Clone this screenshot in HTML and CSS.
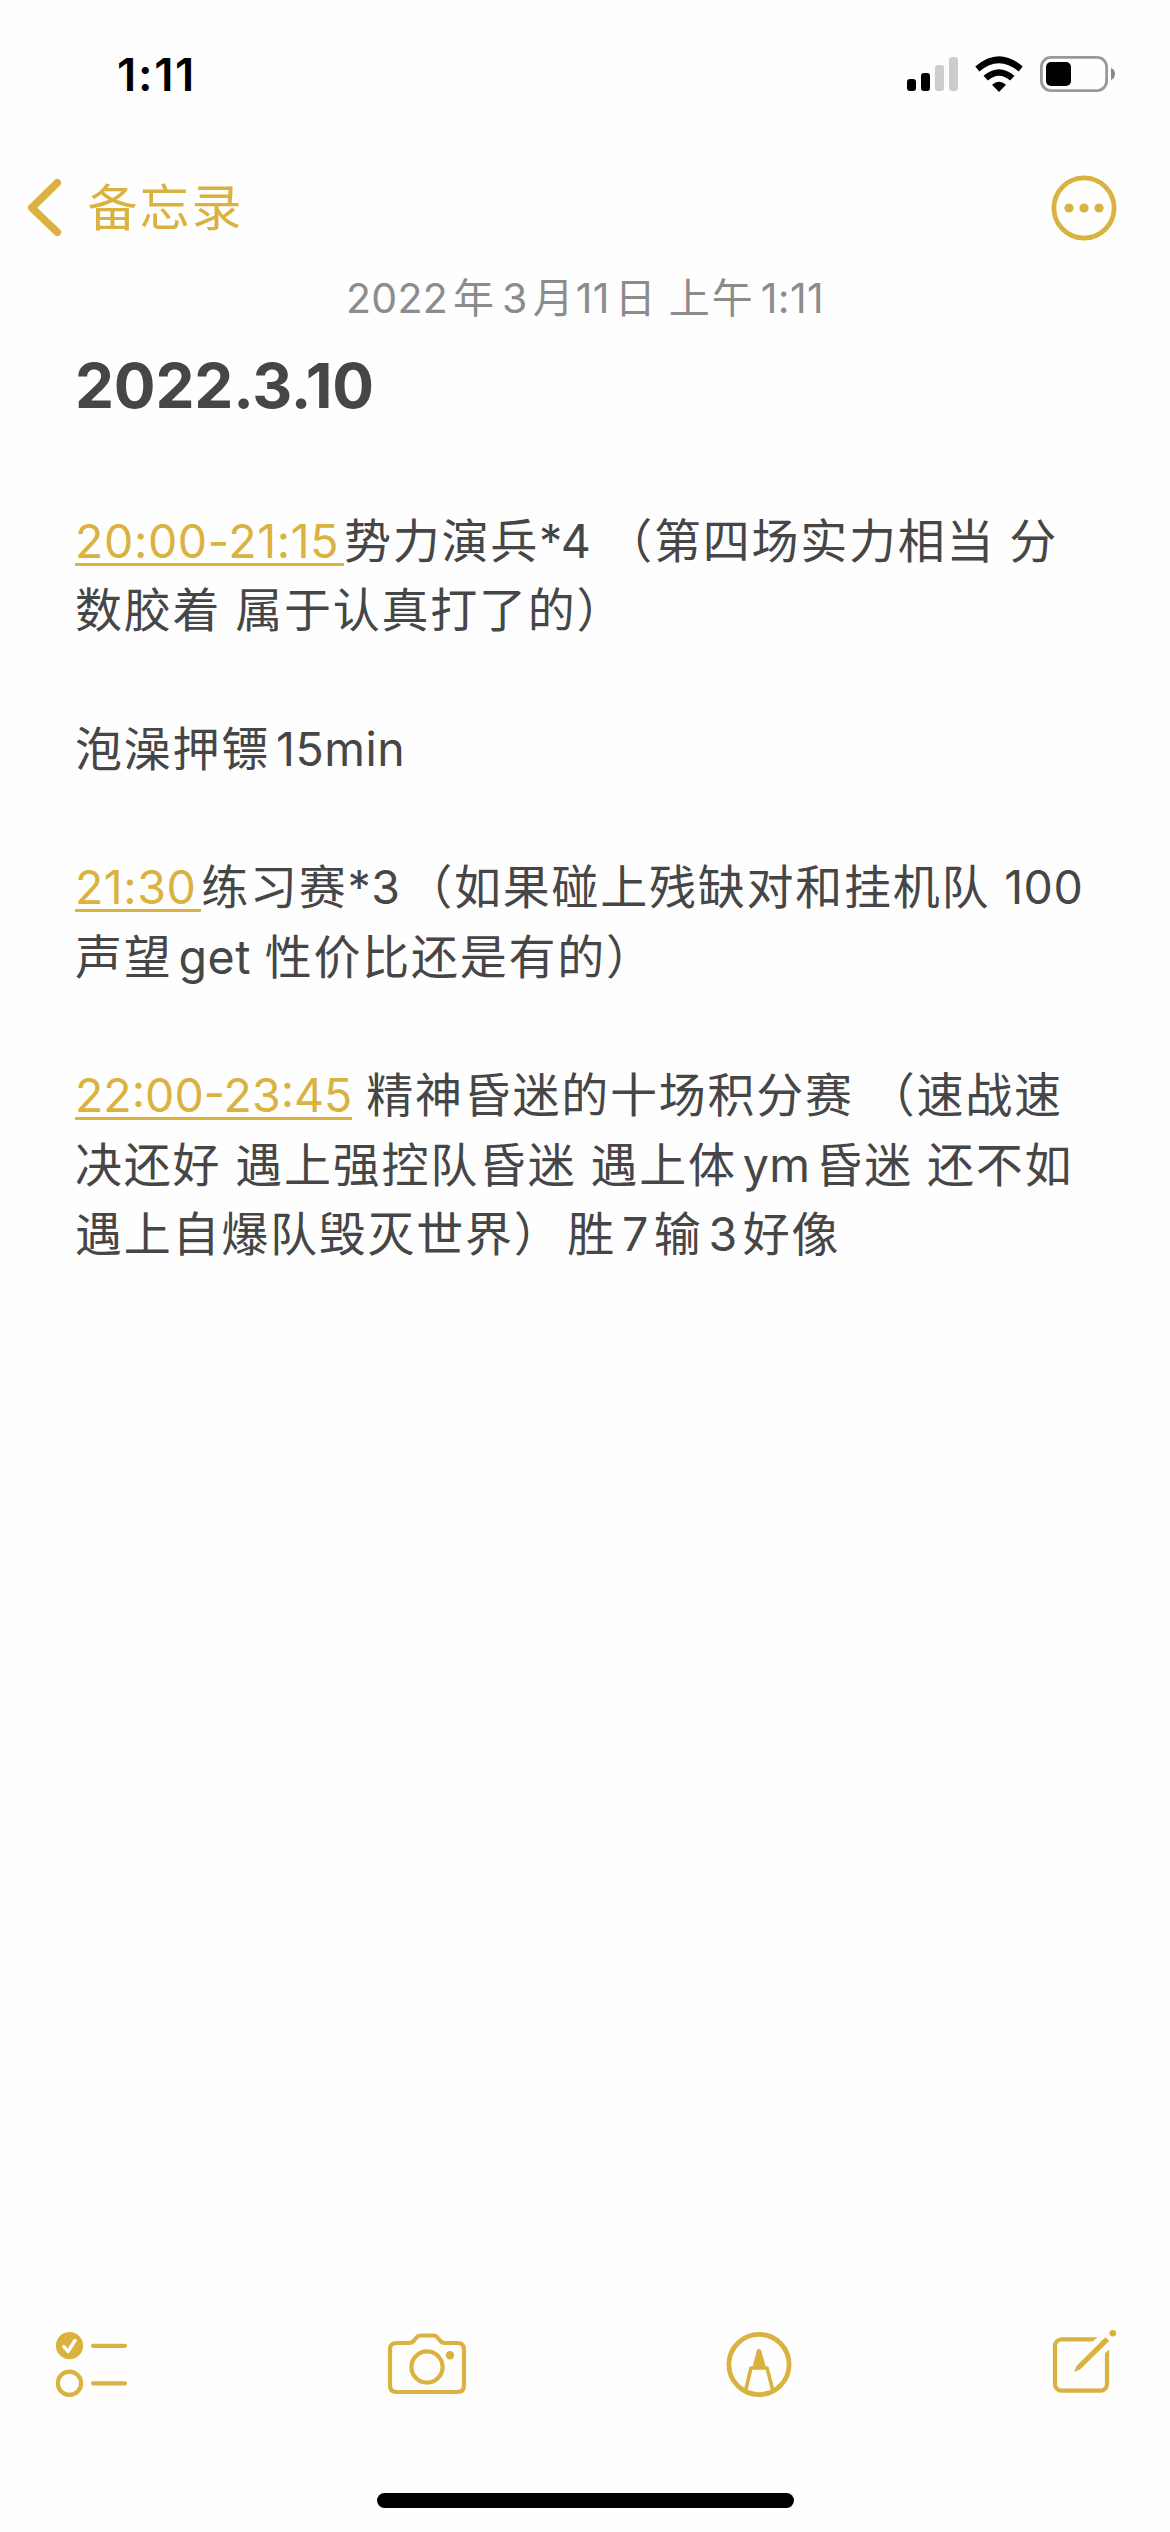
FILE: index.html
```
<!DOCTYPE html>
<html lang="zh-CN">
<head>
    <meta charset="UTF-8">
    <meta name="viewport" content="width=device-width, initial-scale=1.0">
    <title>备忘录</title>
    <link rel="stylesheet" href="styles.css">
</head>
<body>
    <div class="status-bar">
        <span class="time">1:11</span>
        <div class="status-icons">
            <svg width="51" height="36" viewBox="907 56 51 36">
                <rect x="907" y="79" width="9" height="12" rx="3"/>
                <rect x="921" y="73" width="9" height="18" rx="3"/>
                <rect x="935" y="65" width="9" height="26" rx="3" fill="#ccc"/>
                <rect x="949" y="57" width="9" height="34" rx="3" fill="#ccc"/>
            </svg>
            <svg width="48" height="36" viewBox="975 55 48 36">
                <path d="M975.3 65.5Q999 45 1022.7 65.5L1018.6 70.6Q999 54 979.4 70.6Z"/>
                <path d="M983.5 74.8Q999 61.5 1014.5 74.8L1010.2 79.6Q999 70 987.8 79.6Z"/>
                <path d="M992 83.8Q999 77.5 1006 83.8L999 91Z"/>
            </svg>
            <svg width="75" height="36" viewBox="1040 56 75 36">
                <rect x="1041.4" y="57.4" width="65.2" height="33.2" rx="9.5" fill="none" stroke="#999" stroke-width="2.8"/>
                <rect x="1046" y="62" width="25" height="24" rx="5"/>
                <path d="M1111 68Q1115 69.5 1115 74T1111 80Z" fill="#888"/>
            </svg>
        </div>
    </div>

    <div class="nav">
        <a class="back">
            <svg width="34" height="60" viewBox="28 177 34 60">
                <path d="M57.3 181.8L31.8 206.7L57.3 231.3" fill="none" stroke="#dab23f" stroke-width="7.6" stroke-linecap="round" stroke-linejoin="round"/>
            </svg>
            <span>备忘录</span>
        </a>
        <svg width="66" height="66" viewBox="-33 -33 66 66" fill="#dab23f">
            <circle r="30.1" fill="none" stroke="#dab23f" stroke-width="4.8"/>
            <circle cx="-15" r="4.6"/>
            <circle r="4.6"/>
            <circle cx="15" r="4.6"/>
        </svg>
    </div>

    <div class="note">
        <div class="date"><span class="num after">2022</span>年<span class="num before after">3</span>月<span class="num after">11</span>日 上午<span class="num before">1:11</span></div>
        <h1>2022.3.10</h1>
        <div class="line"><a class="en link wide after">20:00-21:15</a>势力演兵<span class="en">*4</span> （第四场实力相当 分</div>
        <div class="line">数胶着 属于认真打了的）</div>
        <div class="line"></div>
        <div class="line">泡澡押镖<span class="en before">15min</span></div>
        <div class="line"></div>
        <div class="line"><a class="en link after">21:30</a>练习赛<span class="en">*3</span>&#8202;（如果碰上残缺对和挂机队 <span class="en">100</span></div>
        <div class="line">声望<span class="en before">get</span> 性价比还是有的）</div>
        <div class="line"></div>
        <div class="line"><a class="en link tight">22:00-23:45</a> 精神昏迷的十场积分赛 （速战速</div>
        <div class="line">决还好 遇上强控队昏迷 遇上体<span class="en before after">ym</span>昏迷 还不如</div>
        <div class="line">遇上自爆队毁灭世界）&#8202;胜<span class="en before after">7</span>输<span class="en before after">3</span>好像</div>
    </div>

    <div class="toolbar">
        <!-- checklist -->
        <svg width="71" height="70" viewBox="56 2328 71 70">
            <circle cx="69.5" cy="2345.7" r="13.6" class="fill"/>
            <path d="M63.8 2346.5L68 2351.5L75 2340.5" class="tick"/>
            <circle cx="69.5" cy="2383.3" r="11.6"/>
            <path d="M93 2345.8H125M93 2383.3H125"/>
        </svg>
        <!-- camera -->
        <svg width="78" height="70" viewBox="388 2328 78 70">
            <path d="M396.5 2343H409Q412 2343 414 2340.5L417 2337Q418.5 2335.5 421 2335.5H433Q435.5 2335.5 437 2337L440 2340.5Q442 2343 445 2343H457.5Q464 2343 464 2349.5V2385.5Q464 2392 457.5 2392H396.5Q390 2392 390 2385.5V2349.5Q390 2343 396.5 2343Z"/>
            <circle cx="427" cy="2367" r="15.6"/>
            <circle cx="450" cy="2355.2" r="4.2" class="fill"/>
        </svg>
        <!-- markup pen -->
        <svg width="66" height="70" viewBox="725.5 2328 66 70">
            <circle cx="758.5" cy="2364.5" r="30.1" stroke-width="4.8"/>
            <path d="M745.5 2389L750.5 2368H766.5L772 2389" stroke-width="3.6"/>
            <path d="M751.5 2369L756.3 2350.5Q758.5 2347 760.7 2350.5L766 2369Z" class="fill"/>
        </svg>
        <!-- compose -->
        <svg width="63" height="70" viewBox="1053 2328 63 70">
            <rect x="1055" y="2339.3" width="52" height="51.4" rx="6.5"/>
            <path d="M1085 2361.5L1120 2326.5" class="cut"/>
            <path d="M1074 2372L1076.5 2366L1105.3 2337.2L1109.2 2341.1L1080 2369.5Z" class="fill"/>
            <circle cx="1112.8" cy="2333.2" r="3.3" class="fill"/>
        </svg>
    </div>
    <div class="home-bar"></div>
</body>
</html>
```
FILE: styles.css
```
* {
    box-sizing: border-box;
}

body {
    margin: 0;
    width: 1170px;
    height: 2532px;
    display: flex;
    flex-direction: column;
    background-color: #fefefe;
    color: #464646;
    font-family: Inter, "Noto Sans CJK SC", sans-serif;
    overflow: hidden;
}

svg {
    display: block;
    flex: none;
    overflow: visible;
}

.status-bar {
    height: 148px;
    padding: 0 55px 0 117px;
    display: flex;
    justify-content: space-between;
    align-items: center;
    color: #000;
}

.time {
    font-size: 45.5px;
    font-weight: 600;
    letter-spacing: 1.7px;
}

.status-icons {
    display: flex;
    align-items: center;
    gap: 17px;
}

.nav {
    height: 119px;
    padding: 0 53px 0 28px;
    display: flex;
    justify-content: space-between;
    align-items: center;
}

.back {
    display: flex;
    align-items: center;
    gap: 25.5px;
    color: #dab23f;
    font-size: 50px;
    letter-spacing: 2px;
    font-family: "Noto Sans CJK SC", sans-serif;
}

.back span {
    padding-bottom: 8px;
}

.note {
    flex: 1;
    padding-left: 75px;
    white-space: nowrap;
}

.date {
    height: 56px;
    line-height: 56px;
    padding-left: 271px;
    font-size: 41px;
    letter-spacing: 2px;
    font-family: "Noto Sans CJK SC", sans-serif;
    color: #8c8c8c;
}

.num {
    font-family: Inter, sans-serif;
    letter-spacing: 0.3px;
}

h1 {
    margin: 21px 0 0;
    height: 159px;
    line-height: 84px;
    font-size: 62px;
    font-weight: 700;
    letter-spacing: -0.2px;
}

.line {
    height: 69.3px;
    line-height: 69.3px;
    font-size: 47px;
    letter-spacing: 1.75px;
    word-spacing: 1.7px;
    font-family: "Noto Sans CJK SC", sans-serif;
}

.en {
    font-family: Inter, sans-serif;
    font-size: 46.5px;
    letter-spacing: 0.5px;
}

.before {
    margin-left: 6px;
}

.after {
    padding-right: 5px;
}

.link {
    color: #dab23f;
    text-decoration: none;
    background: linear-gradient(#dab23f, #dab23f) 0 calc(100% - 3px) / 100% 3px no-repeat;
}

.wide {
    letter-spacing: 0.6px;
}

.tight {
    letter-spacing: 0;
}

.toolbar {
    height: 70px;
    margin-bottom: 95px;
    padding: 0 54px 0 56px;
    display: flex;
    justify-content: space-between;
}

.toolbar svg {
    fill: none;
    stroke: #dab23f;
    stroke-width: 4.2;
    stroke-linecap: round;
    stroke-linejoin: round;
}

.toolbar .fill {
    fill: #dab23f;
    stroke: none;
}

.toolbar .tick {
    stroke: #fff;
    stroke-width: 3.4;
}

.toolbar .cut {
    stroke: #fefefe;
    stroke-width: 17;
    stroke-linecap: butt;
}

.home-bar {
    width: 417px;
    height: 15px;
    margin: 0 auto 24px;
    border-radius: 8px;
    background-color: #000;
}
```
